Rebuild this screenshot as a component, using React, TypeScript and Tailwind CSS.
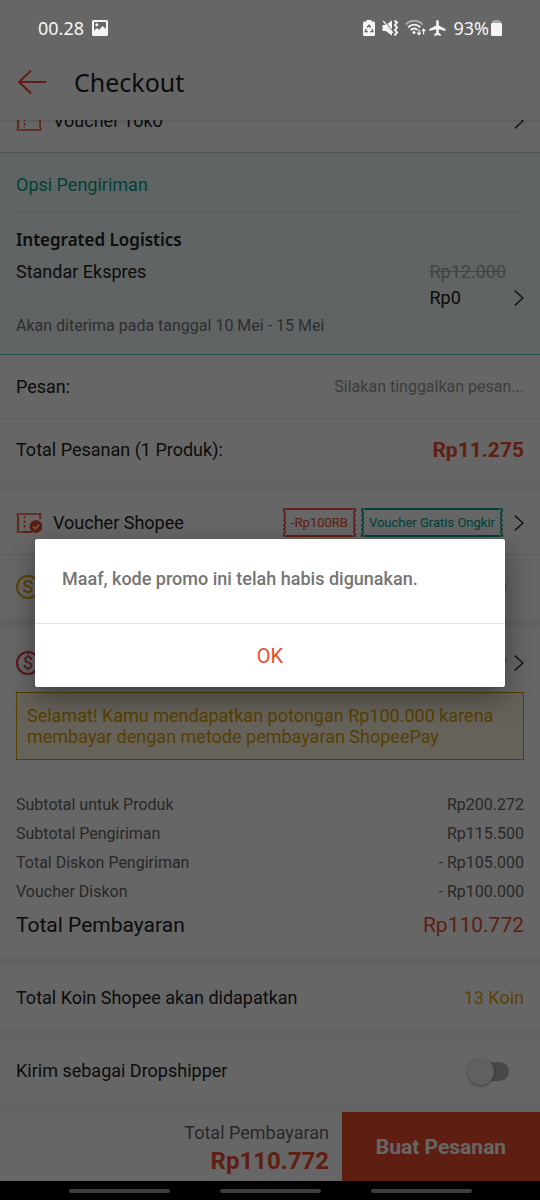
import { useState } from "react";
import type { ReactNode } from "react";

function Chevron() {
  return (
    <svg className="h-4 w-[10px] shrink-0" viewBox="0 0 10 16" fill="none" stroke="#333" strokeWidth="1.500">
      <path d="M.8 .6L9 8 .8 15.400" />
    </svg>
  );
}

function TicketIcon({ checked = false }: { checked?: boolean }) {
  return (
    <svg className="h-5 w-[26px] shrink-0" viewBox="0 0 26 20" fill="none" stroke="#ee4d2d" strokeWidth="1.500">
      <path d="M1.500 1H24.500l-.8 2.200.8 1.600-.8 1.800.8 1.800-.8 2 .8 2-.8 2 .8 2V19h-23v-2.200l1.100-1.300-1.100-1.500 1.100-1.700-1.100-1.700L2.600 9 1.500 7.300l1.100-1.600L1.500 4V1z" />
      <path d="M8.500 3v14" strokeDasharray="2.500 2" />
      {checked && (
        <>
          <circle cx="22" cy="14" r="8" fill="#fff" stroke="none" />
          <path d="M8 19h8" />
          <circle cx="20" cy="13.500" r="6.500" fill="#ee4d2d" stroke="none" />
          <path d="M17.200 13.500l2.200 2.200 3.600-4" stroke="#fff" />
        </>
      )}
    </svg>
  );
}

function CoinIcon({ sign, tone }: { sign: string; tone: string }) {
  return (
    <span className={`flex size-6 shrink-0 items-center justify-center rounded-full border-2 text-lg leading-none ${tone}`}>
      {sign}
    </span>
  );
}

function TagEdge() {
  return (
    <svg className="h-[29px] w-1 shrink-0" viewBox="0 0 4 29" fill="none" stroke="currentColor" strokeWidth="1.600">
      <path d="M4 1H.8v2q3 2.300 0 4.600 3 2.300 0 4.600 3 2.300 0 4.600 3 2.300 0 4.600 3 2.300 0 4.600V28H4" />
    </svg>
  );
}

function VoucherTag({ tone, children }: { tone: string; children: ReactNode }) {
  return (
    <span className={`flex h-[29px] items-stretch text-[13px] whitespace-nowrap ${tone}`}>
      <TagEdge />
      <span className="flex items-center border-y-2 border-current px-1">{children}</span>
      <span className="flex rotate-180">
        <TagEdge />
      </span>
    </span>
  );
}

function Toggle({ id, label }: { id: string; label?: string }) {
  return (
    <input
      id={id}
      type="checkbox"
      role="switch"
      aria-label={label}
      className="relative h-[19px] w-9 shrink-0 appearance-none rounded-full bg-[#b2b2b2] before:absolute before:-top-1 before:-left-[6px] before:size-[27px] before:rounded-full before:bg-[#f1f1f1] before:shadow-[0_1px_3px_rgba(0,0,0,0.4)] checked:bg-[#f7a696] checked:before:left-4"
    />
  );
}

function StatusBar({ dimmed }: { dimmed: boolean }) {
  return (
    <div
      className={`relative z-20 flex h-14 items-center justify-between px-[38px] font-['Noto_Sans',sans-serif] text-lg ${dimmed ? "text-[#f5f5f5]" : "text-[#222]"}`}
    >
      <div className="flex items-center gap-2">
        <span>00.28</span>
        <svg className="size-4" viewBox="0 0 16 16" fill="currentColor" fillRule="evenodd">
          <path d="M1.500 0h13A1.500 1.500 0 0116 1.500v13a1.500 1.500 0 01-1.500 1.500h-13A1.500 1.500 0 010 14.500v-13A1.500 1.500 0 011.500 0zM2 2v8.500l3-2.500 2.200 1.700L10.500 6 14 9V2zM4.800 3.300a1.500 1.500 0 110 3 1.500 1.500 0 010-3z" />
        </svg>
      </div>
      <div className="flex items-center gap-[2px]">
        <svg className="h-4 w-3" viewBox="0 0 12 16" fill="currentColor">
          <path d="M3.500 0h5v1.500h2A1.500 1.500 0 0112 3v11.500a1.500 1.500 0 01-1.500 1.500h-9A1.500 1.500 0 010 14.500V3a1.500 1.500 0 011.500-1.500h2z" />
          <path d="M4.200 7.600L6 5.200l1.800 2.400M9 9l.9 2.600H7.200M4.800 11.600H2.200L3.300 9" fill="none" stroke="#666" strokeWidth="1.400" />
        </svg>
        <svg className="ml-[5px] h-4 w-[17px]" viewBox="0 0 17 16" fill="currentColor">
          <path d="M.5 5h3.200L10 .5v15L3.700 11H.5z" />
          <path d="M1.300 .5l10 12" stroke="#666" strokeWidth="1.800" />
          <path d="M1.200 .8l9.700 12" stroke="currentColor" strokeWidth="1.300" />
          <path d="M12.500 .5L15 2.500l-2 2.500 2 2.500-2 2.500 2 2.500-2.500 3" fill="none" stroke="currentColor" strokeWidth="2" />
        </svg>
        <svg className="ml-1 h-4 w-[21px]" viewBox="0 0 21 16" fill="none" stroke="currentColor" strokeWidth="1.900">
          <path d="M.8 4.500c4.500-5 12.300-5 16.800 0" opacity=".5" />
          <path d="M3.200 7.300c3.400-3.600 8.600-3.600 12 0M5.800 10c2-2 4.800-2 6.600-.2" />
          <circle cx="9" cy="12.400" r="1.500" fill="currentColor" stroke="none" />
          <path d="M14 9.500v5M12.300 12.700l1.700 2 1.700-2M18.600 14.500v-5M16.900 11.200l1.700-2 1.700 2" strokeWidth="1.200" />
        </svg>
        <svg className="ml-px h-4 w-[17px]" viewBox="0 0 17 16" fill="currentColor">
          <path d="M8.500 0c.9 0 1.300.9 1.300 2v3.500L16.500 9v1.900l-6.700-1.700v3.500l2 1.600V16l-3.300-.9L5.200 16v-1.700l2-1.600V9.200L.5 10.900V9l6.700-3.500V2c0-1.100.4-2 1.300-2z" />
        </svg>
        <span className="ml-[5px]">93%</span>
        <svg className="h-4 w-[11px]" viewBox="0 0 11 16" fill="currentColor">
          <path d="M3 0h5v1h2v2H1V1h2z" opacity=".45" />
          <rect y="3" width="11" height="13" rx="1.200" />
        </svg>
      </div>
    </div>
  );
}

const costs = [
  ["Subtotal untuk Produk", "Rp200.272"],
  ["Subtotal Pengiriman", "Rp115.500"],
  ["Total Diskon Pengiriman", "- Rp105.000"],
  ["Voucher Diskon", "- Rp100.000"],
];

export default function App() {
  const [open, setOpen] = useState(true);

  return (
    <div className="relative flex min-h-screen flex-col bg-[#f5f5f5] font-[Roboto,sans-serif] text-lg leading-6 text-[#222]">
      <header className="relative bg-white shadow-[0_1px_3px_rgba(0,0,0,0.15)]">
        <StatusBar dimmed={open} />
        <div className="flex h-16 items-center gap-7 px-[18px] pb-3">
          <button type="button" aria-label="Kembali">
            <svg className="h-6 w-7" viewBox="0 0 28 24" fill="none" stroke="#ee4d2d" strokeWidth="2">
              <path d="M28 12H1M13 .7L1 12l12 11.300" />
            </svg>
          </button>
          <h1 className="font-['Noto_Sans',sans-serif] text-[25px] leading-8">Checkout</h1>
        </div>
      </header>

      <main className="flex flex-1 flex-col gap-[10px]">
        <section className="bg-white">
          <div className="flex h-8 flex-col justify-end overflow-hidden">
            <div className="flex h-[62px] shrink-0 items-center gap-[11px] px-4">
              <TicketIcon />
              <span className="flex-1">Voucher Toko</span>
              <Chevron />
            </div>
          </div>
          <div className="border-t border-b border-t-[#bcd6d3] border-b-[#69c9bb] bg-[#f0fafb] px-4">
            <h2 className="border-b border-[#dfe9e9] pt-5 pb-[14px] text-[#00a58e]">Opsi Pengiriman</h2>
            <h3 className="pt-4 font-['Noto_Sans',sans-serif] text-[17px] font-semibold">Integrated Logistics</h3>
            <div className="flex items-end justify-between pt-2">
              <span className="self-start">Standar Ekspres</span>
              <div className="flex items-end gap-2">
                <div className="flex flex-col gap-0.5">
                  <s className="text-[#aaa]">Rp12.000</s>
                  <span>Rp0</span>
                </div>
                <span className="pb-1">
                  <Chevron />
                </span>
              </div>
            </div>
            <p className="pt-1 pb-4 text-base text-[#757575]">Akan diterima pada tanggal 10 Mei - 15 Mei</p>
          </div>
          <div className="flex h-16 items-center justify-between border-b border-[#ececec] px-4">
            <label htmlFor="note">Pesan:</label>
            <input
              id="note"
              placeholder="Silakan tinggalkan pesan..."
              className="w-60 bg-transparent text-right text-base placeholder:text-[#999]"
            />
          </div>
          <div className="flex h-[62px] items-center justify-between px-4">
            <span>Total Pesanan (1 Produk):</span>
            <strong className="text-[21px] font-bold text-[#ee4d2d]">Rp11.275</strong>
          </div>
        </section>

        <section className="bg-white">
          <div className="flex h-16 items-center gap-[11px] border-b border-[#ececec] px-4">
            <TicketIcon checked />
            <span className="flex-1">Voucher Shopee</span>
            <div className="flex gap-[5px]">
              <VoucherTag tone="text-[#ee4d2d]">-Rp100RB</VoucherTag>
              <VoucherTag tone="text-[#00a58e]">Voucher Gratis Ongkir</VoucherTag>
            </div>
            <Chevron />
          </div>
          <div className="flex h-[63px] items-center justify-between pr-[34px] pl-4">
            <CoinIcon sign="S" tone="border-[#e6a700] text-[#e6a700] font-medium" />
            <Toggle id="coins" label="Koin Shopee" />
          </div>
        </section>

        <section className="bg-white px-4">
          <div className="flex h-16 items-center gap-2 pt-1.5">
            <CoinIcon sign="$" tone="border-[#e0383e] text-[#e0383e]" />
            <span className="flex-1 text-right">ShopeePay</span>
            <Chevron />
          </div>
          <p className="border border-[#d99e00] bg-[#fdf6e0] px-[10px] py-3 leading-[21px] text-[#d99e00]">
            Selamat! Kamu mendapatkan potongan Rp100.000 karena membayar dengan metode pembayaran ShopeePay
          </p>
          <dl className="flex flex-col gap-[5px] pt-[33px] pb-[19px]">
            {costs.map(([label, value]) => (
              <div key={label} className="flex justify-between text-base text-[#666]">
                <dt>{label}</dt>
                <dd>{value}</dd>
              </div>
            ))}
            <div className="flex justify-between pt-1 text-[21px]">
              <dt>Total Pembayaran</dt>
              <dd className="text-[#ee4d2d]">Rp110.772</dd>
            </div>
          </dl>
        </section>

        <section className="flex h-[63px] items-center justify-between bg-white px-4">
          <span>Total Koin Shopee akan didapatkan</span>
          <span className="text-[#e6a700]">13 Koin</span>
        </section>

        <section className="flex h-16 items-center justify-between bg-white pr-[31px] pl-4">
          <label htmlFor="dropship">Kirim sebagai Dropshipper</label>
          <Toggle id="dropship" />
        </section>
      </main>

      <footer className="mt-[9px]">
        <div className="flex h-[69px] bg-white">
          <div className="flex flex-1 flex-col items-end justify-center gap-1 pr-[13px]">
            <span className="text-[#666]">Total Pembayaran</span>
            <strong className="text-2xl leading-6 font-bold text-[#ee4d2d]">Rp110.772</strong>
          </div>
          <button type="button" className="w-[198px] bg-[#ee4d2d] text-[21px] font-bold text-white">
            Buat Pesanan
          </button>
        </div>
        <div className="flex h-[19px] items-center justify-center gap-[50px] bg-black">
          <span className="h-1 w-[101px] rounded-full bg-[#999]" />
          <span className="h-1 w-[101px] rounded-full bg-[#999]" />
          <span className="h-1 w-[101px] rounded-full bg-[#999]" />
        </div>
      </footer>

      {open && (
        <div className="absolute inset-0 z-10 flex items-center justify-center bg-black/60 px-[35px] pt-[45px] pb-[19px]">
          <div
            role="alertdialog"
            aria-modal="true"
            aria-labelledby="promo-message"
            className="w-full rounded-xs bg-white shadow-[0_10px_28px_rgba(0,0,0,0.4)]"
          >
            <p id="promo-message" className="px-[27px] pt-7 pb-8 font-medium text-[#757575]">
              Maaf, kode promo ini telah habis digunakan.
            </p>
            <button
              type="button"
              onClick={() => setOpen(false)}
              className="h-16 w-full border-t border-[#e4e4e4] text-xl text-[#ee4d2d]"
            >
              OK
            </button>
          </div>
        </div>
      )}
    </div>
  );
}
